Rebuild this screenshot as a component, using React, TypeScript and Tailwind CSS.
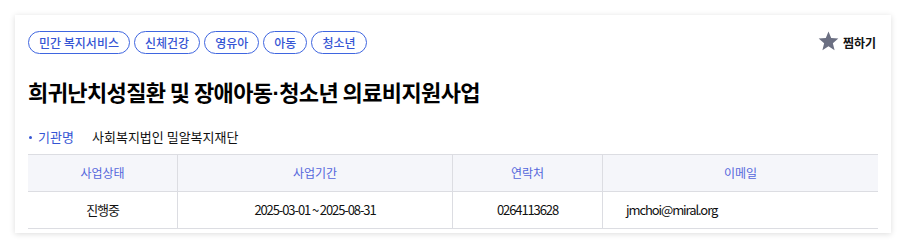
import React from 'react';

const tags = ['민간 복지서비스', '신체건강', '영유아', '아동', '청소년'];

const columns = [
  { label: '사업상태', value: '진행중', width: 'w-[149px]', align: 'justify-center' },
  { label: '사업기간', value: '2025-03-01 ~ 2025-08-31', width: 'w-[275px]', align: 'justify-center' },
  { label: '연락처', value: '0264113628', width: 'w-[150px]', align: 'justify-center' },
  { label: '이메일', value: 'jmchoi@miral.org', width: 'flex-1', align: 'justify-start pl-[23px]' },
];

export default function App() {
  return (
    <div className="w-[906px] h-[248px] bg-white pt-[15px] pl-[15px] font-['Noto_Sans_CJK_KR','Noto_Sans',sans-serif]">
      <div className="w-[876px] h-[218px] bg-white shadow-[0_1px_6px_rgba(0,0,0,0.14)] pt-[16px] px-[13px]">
        {/* Tags & bookmark */}
        <div className="flex items-center justify-between h-[23px]">
          <div className="flex gap-[4px]">
            {tags.map((tag) => (
              <span
                key={tag}
                className="h-[23px] px-[10px] flex items-center rounded-full border border-[#3f66e0] text-[12px] font-medium text-[#3555d4] leading-none"
              >
                {tag}
              </span>
            ))}
          </div>
          <button className="flex items-center gap-[4px] text-[12px] font-semibold text-[#111] mr-[2px]">
            <svg width="21" height="20" viewBox="0 0 24 23" fill="#6b6f82" className="-mt-[3px]">
              <path d="M12 0.5l3.1 7.6 8.2 0.6-6.3 5.3 2 8-7-4.4-7 4.4 2-8-6.3-5.3 8.2-0.6z" />
            </svg>
            <span>찜하기</span>
          </button>
        </div>

        {/* Title */}
        <h2 className="mt-[22px] h-[30px] text-[22px] font-bold text-black tracking-[-0.6px] leading-[30px]">
          희귀난치성질환 및 장애아동<span className="font-['Liberation_Sans',sans-serif] leading-none">·</span>청소년 의료비지원사업
        </h2>

        {/* Organization */}
        <div className="mt-[22px] flex items-center text-[13px] leading-[18px]">
          <span className="w-[3px] h-[3px] rounded-full bg-[#3555d4] ml-[1px] mr-[6px]" />
          <span className="text-[#3555d4] w-[54px]">기관명</span>
          <span className="text-[#111]">사회복지법인 밀알복지재단</span>
        </div>

        {/* Info table */}
        <div className="mt-[8px] border-t border-b border-[#dcdde2]">
          <div className="flex bg-[#f5f6fa] h-[37px] border-b border-[#dcdde2]">
            {columns.map((col, i) => (
              <div
                key={col.label}
                className={`${col.width} flex items-center justify-center text-[12px] text-[#5466dc] ${i > 0 ? 'border-l border-[#dcdde2]' : ''}`}
              >
                {col.label}
              </div>
            ))}
          </div>
          <div className="flex h-[36px]">
            {columns.map((col, i) => (
              <div
                key={col.label}
                className={`${col.width} flex items-center ${col.align} text-[13px] text-[#111] tracking-[-1.1px] ${i > 0 ? 'border-l border-[#dcdde2]' : ''}`}
              >
                {col.value}
              </div>
            ))}
          </div>
        </div>
      </div>
    </div>
  );
}
